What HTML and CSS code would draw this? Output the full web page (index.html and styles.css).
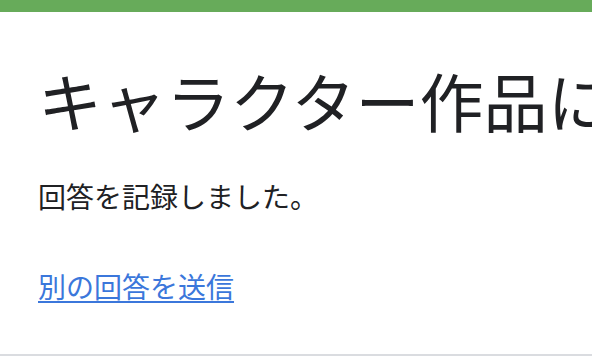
FILE: index.html
```html
<!DOCTYPE html>
<html lang="ja">
<head>
    <meta charset="UTF-8">
    <meta name="viewport" content="width=device-width, initial-scale=1.0">
    <title>キャラクター作品に関するアンケート</title>
    <link rel="stylesheet" href="styles.css">
</head>
<body>
    <div class="top-bar"></div>

    <!-- 回答完了カード -->
    <div class="card">
        <h1 class="form-title">キャラクター作品に関するアンケート</h1>
        <p class="message">回答を記録しました。</p>
        <a href="#" class="another-link">別の回答を送信</a>
    </div>
</body>
</html>
```

FILE: styles.css
```css
/* Global */
body {
    margin: 0;
    padding: 0;
    background-color: #fff;
    font-family: "Noto Sans CJK JP", "Noto Sans", sans-serif;
    color: #202124;
    overflow: hidden;
}

/* Top bar */
.top-bar {
    height: 12px;
    background-color: #67ab5a;
}

/* Card */
.card {
    height: 344px;
    box-sizing: border-box;
    padding: 49px 0 0 38px;
    border-bottom: 2px solid #dadce0;
    white-space: nowrap;
    overflow: hidden;
}

.form-title {
    margin: 0;
    font-size: 64px;
    font-weight: 400;
    line-height: 76px;
    letter-spacing: 0;
}

.message {
    margin: 39px 0 0;
    font-size: 28px;
    line-height: 40px;
}

.another-link {
    display: inline-block;
    margin-top: 50px;
    font-size: 28px;
    line-height: 40px;
    color: #3b77db;
    text-decoration: underline;
    text-underline-offset: 3px;
}
```
